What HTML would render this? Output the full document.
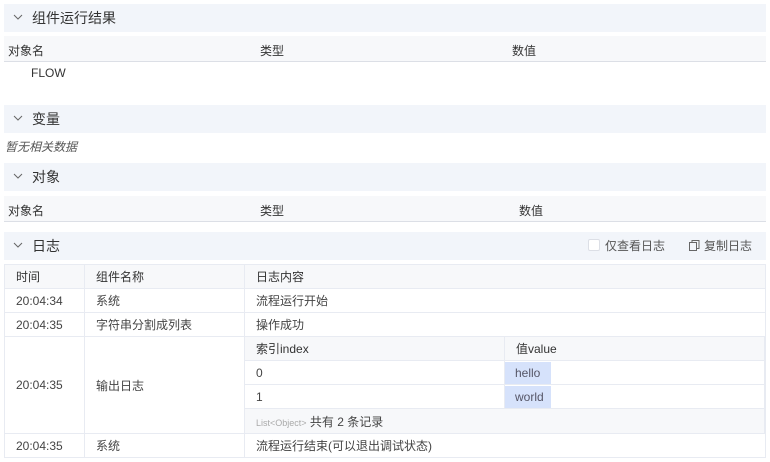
<!DOCTYPE html>
<html><head><meta charset="utf-8"><style>
*{margin:0;padding:0;box-sizing:border-box}
body{width:770px;height:462px;background:#fff;font-family:"Liberation Sans","Noto Sans CJK SC",sans-serif;font-size:12px;color:#333;position:relative;overflow:hidden}
.a{position:absolute}
.hd{position:absolute;left:4px;width:762px;height:28px;background:#f2f5fa;font-size:14px;line-height:28px;padding-left:28px}
.hd svg{position:absolute;left:9px;top:10px}
.th{position:absolute;left:4px;width:762px;height:26px;background:#f7f8fa;border-bottom:1px solid #dcdfe6}
.th span{position:absolute;top:6px}
table{border-collapse:collapse;position:absolute}
td{border:1px solid #e8ebf2;height:24px;padding:0 0 0 11px;vertical-align:middle;color:#444}
</style></head><body>
<div class="hd" style="top:4px"><svg width="10" height="6"><path d="M1 1l4 4 4-4" stroke="#666" fill="none"/></svg>组件运行结果</div>
<div class="th" style="top:36px"><span style="left:4px">对象名</span><span style="left:256px">类型</span><span style="left:508px">数值</span></div>
<div class="a" style="left:31px;top:66px">FLOW</div>
<div class="hd" style="top:105px"><svg width="10" height="6"><path d="M1 1l4 4 4-4" stroke="#666" fill="none"/></svg>变量</div>
<div class="a" style="left:5px;top:138px;font-style:italic;color:#555">暂无相关数据</div>
<div class="hd" style="top:163px"><svg width="10" height="6"><path d="M1 1l4 4 4-4" stroke="#666" fill="none"/></svg>对象</div>
<div class="th" style="top:196px"><span style="left:4px">对象名</span><span style="left:256px">类型</span><span style="left:515px">数值</span></div>
<div class="hd" style="top:232px"><svg width="10" height="6"><path d="M1 1l4 4 4-4" stroke="#666" fill="none"/></svg>日志
<span class="a" style="left:584px;top:7px;width:12px;height:12px;border:1px solid #dcdfe6;border-radius:2px;background:#fff"></span>
<span class="a" style="left:601px;top:0;font-size:12px;color:#555">仅查看日志</span>
<svg class="a" style="left:685px;top:8px" width="11" height="11"><rect x="0.5" y="2.5" width="7" height="8" fill="none" stroke="#666"/><path d="M3 2.5V0.5h7v8H8" fill="none" stroke="#666"/></svg>
<span class="a" style="left:700px;top:0;font-size:12px;color:#555">复制日志</span></div>
<table style="left:4px;top:264px;width:762px">
<tr style="background:#f7f8fa"><td style="width:80px;color:#333">时间</td><td style="width:160px;color:#333">组件名称</td><td style="color:#333">日志内容</td></tr>
<tr><td>20:04:34</td><td>系统</td><td>流程运行开始</td></tr>
<tr><td>20:04:35</td><td>字符串分割成列表</td><td>操作成功</td></tr>
<tr><td style="height:97px">20:04:35</td><td>输出日志</td><td style="padding:0"></td></tr>
<tr><td>20:04:35</td><td>系统</td><td>流程运行结束(可以退出调试状态)</td></tr>
</table>
<table style="left:244px;top:336px;width:521px">
<tr style="background:#f7f8fa"><td style="width:260px;color:#333">索引index</td><td style="color:#333">值value</td></tr>
<tr><td>0</td><td style="padding:0"><span style="display:inline-block;width:46px;height:22px;line-height:22px;background:#d6e2fb;padding-left:10px;color:#556">hello</span></td></tr>
<tr><td>1</td><td style="padding:0"><span style="display:inline-block;width:46px;height:22px;line-height:22px;background:#d6e2fb;padding-left:10px;color:#556">world</span></td></tr>
<tr style="background:#f7f8fa"><td colspan="2" style="height:25px"><span style="font-size:9px;color:#aaa">List&lt;Object&gt;</span> 共有 2 条记录</td></tr>
</table>
</body></html>
